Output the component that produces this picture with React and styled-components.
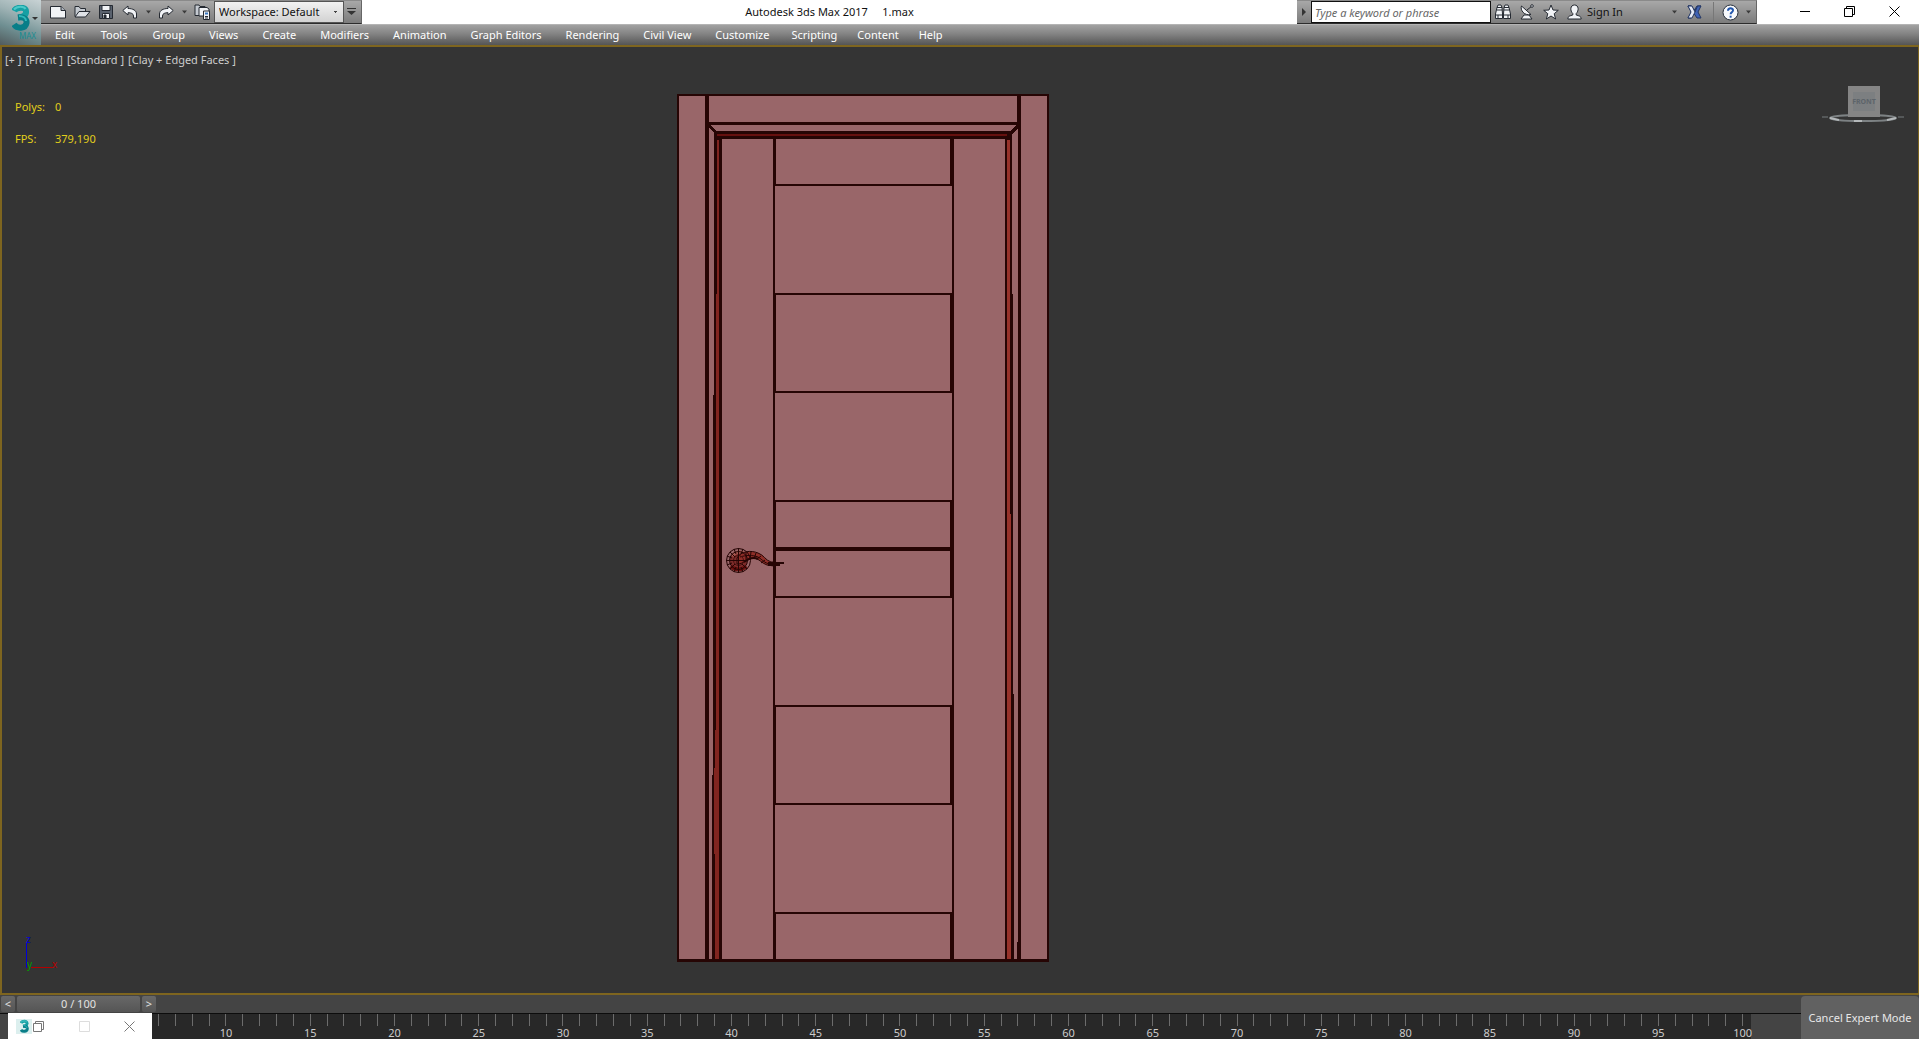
import { useState } from 'react';
import styled, { createGlobalStyle } from 'styled-components';

const GlobalStyle = createGlobalStyle`
  * {
    box-sizing: border-box;
  }
  body {
    margin: 0;
    background: #444;
    font-family: 'Noto Sans', 'Open Sans', sans-serif;
    font-size: 11px;
    line-height: 16px;
  }
  button, input, select {
    font: inherit;
    color: inherit;
    margin: 0;
    padding: 0;
    border: 0;
    background: none;
  }
  svg {
    display: block;
    flex: none;
  }
`

const Page = styled.div`
  position: relative;
  display: flex;
  flex-direction: column;
  height: 100vh;
  overflow: hidden;
`

const Header = styled.header`
  display: grid;
  grid-template-columns: 41px 1fr;
  grid-template-rows: 24px 21px;
`

const AppButton = styled.button`
  grid-row: 1 / 3;
  display: flex;
  align-items: center;
  background: linear-gradient(200deg, #c9d3d5 0%, #9fb3b5 35%, #6f8f92 65%, #515b5d 100%);
`

const TitleBar = styled.div`
  display: flex;
  background: #fff;
  min-width: 0;
`

const ToolStrip = styled.div`
  display: flex;
  align-items: center;
  height: 24px;
  padding: ${props => props.pad};
  background: linear-gradient(#a8a8a8, #7c7c7c);
  border-top: 1px solid #8a8a8a;
  border-bottom: 1px solid #2c2c2c;
  border-right: 1px solid #666;
`

const IconButton = styled.button`
  display: flex;
  flex: none;
  align-items: center;
  justify-content: center;
  width: ${props => props.w || 24}px;
  height: 22px;
`

const WorkspaceSelect = styled.select`
  appearance: none;
  width: 130px;
  height: 22px;
  padding: 0 4px;
  border: 1px solid #555;
  color: #111;
  background:
    linear-gradient(#444, #444) 119px 9px / 3px 1px no-repeat,
    linear-gradient(#444, #444) 120px 10px / 1px 1px no-repeat,
    linear-gradient(#f2f2f2, #d2d2d2);
`

const Title = styled.h1`
  flex: 1;
  margin: 0;
  font-size: 11px;
  font-weight: 400;
  line-height: 24px;
  text-align: center;
  white-space: pre;
  color: #111;
`

const SearchInput = styled.input`
  width: 180px;
  height: 22px;
  padding: 0 3px;
  border: 1px solid #111;
  background: #fff;
  font-style: italic;
  &::placeholder {
    color: #666;
    opacity: 1;
  }
`

const SignIn = styled.button`
  display: flex;
  align-items: center;
  gap: 5px;
  width: 99px;
  height: 22px;
  margin-left: 4px;
  white-space: nowrap;
  color: #111;
`

const Separator = styled.span`
  width: 1px;
  height: 20px;
  margin: 0 6px 0 7px;
  background: #777;
`

const WindowButtons = styled.div`
  display: flex;
  padding: ${props => props.pad || 0};
  margin-left: auto;
`

const WindowButton = styled.button`
  display: flex;
  align-items: center;
  justify-content: center;
  width: 45px;
  height: 22px;
`

const MenuBar = styled.nav`
  display: flex;
  padding-left: 1px;
  border-top: 1px solid #b4b4b4;
  background: linear-gradient(#a2a2a2, #838383 45%, #555);
`

const MenuButton = styled.button`
  height: 20px;
  padding: 0 ${props => props.pad}px;
  color: #fff;
  white-space: nowrap;
`

const Viewport = styled.main`
  position: relative;
  flex: 1;
  min-height: 0;
  overflow: hidden;
  border: 2px solid #7e651f;
  border-right-width: 1px;
  background: #343434;
`

const ViewLabels = styled.div`
  display: flex;
  gap: 4px;
  padding: 5px 3px;
  color: #ccc;
`

const Stats = styled.dl`
  display: grid;
  grid-template-columns: 40px auto;
  row-gap: 16px;
  margin: 0;
  padding: 26px 13px;
  color: #e2cf1b;
  dd {
    margin: 0;
  }
`

// objects that float on the viewport canvas
const Placed = styled.div`
  position: absolute;
  left: ${props => props.left};
  right: ${props => props.right};
  top: ${props => props.top};
  bottom: ${props => props.bottom};
`

const BottomBar = styled.footer`
  display: flex;
  height: 44px;
  background: #444;
`

const TimeArea = styled.div`
  flex: 1;
  min-width: 0;
  display: flex;
  flex-direction: column;
`

const SliderRow = styled.div`
  display: flex;
  gap: 2px;
  height: 18px;
  padding: 1px;
`

const SliderButton = styled.button`
  width: ${props => props.w}px;
  height: 16px;
  border-radius: 2px;
  background: linear-gradient(#686868, #555);
  color: #e2e2e2;
`

const TrackBar = styled.div`
  display: flex;
  flex: 1;
  padding: 0 50px 0 49px;
  border-top: 1px solid #0c0c0c;
`

const Ruler = styled.div`
  flex: 1;
  display: grid;
  grid-template-columns: repeat(101, minmax(0, 1fr));
  background: #282828;
`

const Frame = styled.div`
  display: flex;
  flex-direction: column;
  align-items: center;
  color: #ccc;
  line-height: 14px;
  &::before {
    content: '';
    width: 1px;
    height: 12px;
    background: #6c6c6c;
  }
`

const CancelButton = styled.button`
  width: 118px;
  margin-top: 1px;
  border-radius: 4px 4px 0 0;
  background: #616161;
  color: #e8e8e8;
`

const MiniWindow = styled.div`
  position: absolute;
  left: 8px;
  bottom: 0;
  display: flex;
  align-items: center;
  width: 144px;
  height: 26px;
  padding-left: 8px;
  background: #fff;
`

const MiniLogo = styled.span`
  display: flex;
  justify-content: center;
  width: 16px;
  background: #dcefee;
`

const Caret = () => (
  <svg width="5" height="4" viewBox="0 0 5 3"><path d="M0 0h5L2.5 3z" fill="#3a3a3a" /></svg>
)

const Logo = ({ w, h }) => (
  <svg width={w} height={h} viewBox="0 0 18 26">
    <path d="M2 6C4 2 14 1 14 6.500C14.500 11 9 12.500 6 12.500" fill="none" stroke="#16a0a4" strokeWidth="6" />
    <path d="M6 12.500C12 11.500 15 14 14.500 18C13.500 24 5 24 2 19.500" fill="none" stroke="#087e88" strokeWidth="6" />
    <path d="M2 4.500C5 1 12 1 13.500 4" fill="none" stroke="#4cc9c8" strokeWidth="2" />
    <path d="M7 11C11 11 14 13 14 16" fill="none" stroke="#2fb9ba" strokeWidth="2" />
  </svg>
)

const ink = { stroke: '#252a32', strokeWidth: 1, fill: '#f1f3f6', strokeLinejoin: 'round' }

const NewIcon = () => (
  <svg width="16" height="14" viewBox="0 0 16 14" {...ink}>
    <path d="M.5 1.500h10.500l4.500 4v7.500H.5z" /><path d="M11 1.500v4h4.500" fill="#aab0b8" />
  </svg>
)
const OpenIcon = () => (
  <svg width="17" height="14" viewBox="0 0 17 14" {...ink}>
    <path d="M1 11.500V1.500h4l1.500 2h5v3" fill="#c5cad1" /><path d="M1 12l4-5.500h11L11.500 12z" fill="#dfe2e7" />
  </svg>
)
const SaveIcon = () => (
  <svg width="14" height="14" viewBox="0 0 14 14" {...ink}>
    <path d="M.5.5h13v13H.5z" fill="#5a626e" /><path d="M3 .5h8v5H3z" /><path d="M3.500 8.500h7v5h-7z" /><path d="M5 10h2v3H5z" fill="#252a32" />
  </svg>
)
const UndoIcon = ({ flip }) => (
  <svg width="16" height="14" viewBox="0 0 16 14" {...ink}>
    <path transform={flip ? 'translate(16 0) scale(-1 1)' : undefined} d="M.8 5.500L6 1v2.500c5 0 8.500 2 8.500 5.500v4h-3V11C11.500 8.500 9 7.700 6 7.700V10z" />
  </svg>
)
const ProjectIcon = () => (
  <svg width="17" height="16" viewBox="0 0 17 16" {...ink}>
    <path d="M1 11.500V1h4l1 1.500h5v9z" fill="#c5cad1" /><path d="M5 12V3.500h8l2 1.500v7z" />
    <path d="M9.500 7h6v8.500h-6z" /><path d="M11 8.500h3v2h-3z" fill="#3977c0" stroke="none" />
    <path d="M11 12.500h3M11 14h3" />
  </svg>
)
const BinocularsIcon = () => (
  <svg width="16" height="16" viewBox="0 0 16 16" {...ink}>
    <path d="M.5 10l1.500-6.500L3 1h3l1 2.500.5 6.500v4.500h-7zM8.500 10L9 3.500 10 1h3l1 2.500 1.500 6.500v4.500h-7z" />
    <path d="M2 6h5M9 6h5M1 11h6M9 11h6M2 3.500h5M9 3.500h5M3 11v3M13 11v3" />
  </svg>
)
const DishIcon = () => (
  <svg width="15" height="16" viewBox="0 0 15 16" {...ink}>
    <path d="M4 11h5l3 4H1z" /><path d="M1.500 2C0 6 4 12 11 10.500z" /><path d="M7 6l5-4" /><circle cx="12" cy="2" r="1.300" />
  </svg>
)
const StarIcon = () => (
  <svg width="16" height="16" viewBox="0 0 16 16" {...ink}>
    <path d="M8 1l2 5 5.300.3-4.100 3.400L12.600 15 8 12l-4.600 3 1.400-5.300L.7 6.300 6 6z" />
  </svg>
)
const UserIcon = () => (
  <svg width="15" height="16" viewBox="0 0 15 16" {...ink}>
    <path d="M.8 15c0-3 2-3 5-4v-1.500C3 7 3 1 7.500 1s4.500 6 1.700 8.500V11c3 1 5 1 5 4z" />
  </svg>
)
const ExchangeIcon = () => (
  <svg width="15" height="14" viewBox="0 0 15 14" stroke="#243764" strokeLinejoin="round">
    <path d="M14 1h-4L7 5.500 4 1H1l3.500 6z" fill="#3f62b5" />
    <path d="M14 13h-4L7 8.500 4 13H1l3.500-6L1 1h3.500L8 7l2.500-6H14l-3 6z" fill="#3f62b5" />
    <path d="M1 1h4l3 6-3 6H1l3-6z" fill="#e5eaf5" />
  </svg>
)
const HelpIcon = () => (
  <svg width="17" height="17" viewBox="0 0 17 17">
    <circle cx="8.500" cy="8.500" r="7.500" fill="#f7f9fc" stroke="#28303c" />
    <path d="M6 6.800C6 3.500 11.300 3.600 11 6.500C10.800 8.300 8.600 8.300 8.600 10.300" fill="none" stroke="#2357ae" strokeWidth="2" />
    <path d="M7.600 11.700h2v2h-2z" fill="#2357ae" />
  </svg>
)
const RestoreIcon = ({ color = '#000' }) => (
  <svg width="11" height="11" viewBox="0 0 11 11" fill="none" stroke={color}>
    <path d="M.5 2.500h8v8h-8zM2.500 2.500v-2h8v8h-2" />
  </svg>
)
const CloseIcon = ({ color = '#000' }) => (
  <svg width="11" height="11" viewBox="0 0 11 11" stroke={color}><path d="M.5.5l10 10M10.500.5l-10 10" /></svg>
)

const EDGE = '#260504'

// top and bottom of every cross rail of the door leaf
const rails = [[43, 92], [199, 299], [406, 504], [611, 711], [818, 868]]

const Handle = () => (
  <g fill="none" stroke={EDGE} shapeRendering="auto">
    <circle cx="61.500" cy="466.500" r="9" fill="#7c2c2a" stroke="none" />
    <path d="M54 472c3 4 11 5 15 0" stroke="#6d1210" strokeWidth="4" />
    <path d="M55 462c3-4 8-5 12-3" stroke="#a85850" strokeWidth="3" />
    <path d="M60 464c4-7 14-8 21-5 6 2 7 7 13 9h3v4l-7-1c-6-2-7-6-13-7-6 0-10 6-17 6z" fill="#8f2e28" />
    <path d="M63 463c6-2 13-2 18 0 5 3 6 6 12 7" />
    <path d="M67 468c5-4 10-5 14-3" strokeWidth="2" />
    <path d="M91 469h16M91 471h12" strokeWidth="2" />
    <path d="M69 458v9M74 458l-1 7M79 459l-2 6M84 462l-4 3M88 466l-4 3" />
    <circle cx="61.500" cy="466.500" r="12" />
    <circle cx="61.500" cy="466.500" r="9" />
    <circle cx="61.500" cy="466.500" r="5" stroke="#4b100e" />
    <path d="M49 466.500h20M61.500 454v25M53 458l5 5M53 475l5-5M70 475l-5-5M57 455l2 5M66 455l-2 5M57 478l2-5M66 478l-2-5M50 462l5 2M50 471l5-2" />
  </g>
)

const Door = () => (
  <svg width="372" height="868" viewBox="0 0 372 868" shapeRendering="crispEdges">
    <path d="M0 0h372v868H0z" fill={EDGE} />
    <g fill="#996669">
      <path d="M2 2h26v863H2zM32 2h308v26H32zM344 2h26v863h-26z" />
      <path d="M33 31h306l-6 6H39z" />
      <path d="M32 34l5 5v262h-1v380h-1v184h-3zM341 34l-6 6v160h1v400h1v265h3v-17h1z" />
      <path d="M45 45h51v820H45zM277 45h51v820h-51z" />
      <path d="M98 45h177v820H98z" />
    </g>
    <path d="M40 40h290v2H40z" fill="#66100e" />
    <path d="M40 46h2v819h-4v-105h-1v-86h1v-38h1V200h1z" fill="#812520" />
    <path d="M330 46h3v374h1v445h-4z" fill="#97332b" />
    <g fill={EDGE}>
      {rails.map(([top, bottom]) => (
        <g key={top}>
          <path d={`M98 ${top}h177v2H98zM98 ${bottom - 2}h177v2H98z`} />
          <path d={`M98 ${top}h1v${bottom - top}h-1zM273 ${top}h2v${bottom - top}h-2z`} />
        </g>
      ))}
      <path d="M98 453h177v4H98z" />
    </g>
    <Handle />
  </svg>
)

const ViewCube = () => (
  <svg width="82" height="38" viewBox="0 0 82 38">
    <ellipse cx="41" cy="32" rx="33" ry="3" fill="none" stroke="#7d8284" strokeWidth="2" />
    <path d="M8 32l9 2M74 32l-9 2M32 35h8" stroke="#b4b8ba" strokeWidth="2" />
    <path d="M0 31h6M76 31h6" stroke="#777c7e" />
    <path d="M26 0h32v31H26z" fill="#858585" />
    <path d="M31 6h22v19H31z" fill="#7c7f81" />
    <text x="42" y="18" textAnchor="middle" fontSize="7" fontWeight="700" fill="#5d646a">FRONT</text>
  </svg>
)

const AxisTripod = () => (
  <svg width="36" height="48" viewBox="0 -8 36 48" fontSize="10">
    <path d="M2.500 9v25" stroke="#0000d8" />
    <path d="M7 33.500h22" stroke="#b40000" />
    <text x="2" y="9" fill="#0000d8">z</text>
    <text x="3" y="34" fill="#00a000">y</text>
    <text x="28" y="34" fill="#b40000">x</text>
  </svg>
)

const menus = [
  { pad: 13, names: ['Edit', 'Tools'] },
  { pad: 12, names: ['Group', 'Views', 'Create', 'Modifiers', 'Animation', 'Graph Editors', 'Rendering', 'Civil View', 'Customize'] },
  { pad: 10, names: ['Scripting', 'Content', 'Help'] },
]

const frames = Array.from({ length: 101 }, (_, i) => i)

const App = () => {
  const [workspace, setWorkspace] = useState('Workspace: Default')
  const [search, setSearch] = useState('')

  return (
    <Page>
      <GlobalStyle />
      <Header>
        <AppButton type="button" aria-label="Application menu">
          <svg width="41" height="45" viewBox="0 0 41 45">
            <g transform="translate(12 5)"><Logo w={18} h={26} /></g>
            <path d="M32 17h6l-3 3z" fill="#333" />
            <text x="19" y="39" fontSize="8" fill="#1b8d92">MAX</text>
          </svg>
        </AppButton>
        <TitleBar>
          <ToolStrip pad="0 3px 0 5px">
            <IconButton aria-label="New"><NewIcon /></IconButton>
            <IconButton aria-label="Open"><OpenIcon /></IconButton>
            <IconButton aria-label="Save"><SaveIcon /></IconButton>
            <IconButton aria-label="Undo"><UndoIcon /></IconButton>
            <IconButton w={12} aria-label="Undo list"><Caret /></IconButton>
            <IconButton aria-label="Redo"><UndoIcon flip /></IconButton>
            <IconButton w={12} aria-label="Redo list"><Caret /></IconButton>
            <IconButton aria-label="Project folder"><ProjectIcon /></IconButton>
            <WorkspaceSelect aria-label="Workspace" value={workspace} onChange={(e) => setWorkspace(e.target.value)}>
              <option>Workspace: Default</option>
            </WorkspaceSelect>
            <IconButton w={14} aria-label="Customize toolbar">
              <svg width="9" height="8" viewBox="0 0 9 8" fill="#333"><path d="M0 0h9v1H0zM0 3h9L4.500 7z" /></svg>
            </IconButton>
          </ToolStrip>
          <Title>{'Autodesk 3ds Max 2017     1.max'}</Title>
          <ToolStrip pad="0">
            <IconButton w={14} aria-label="Collapse search">
              <svg width="4" height="8" viewBox="0 0 4 8" fill="#333"><path d="M0 0l4 4-4 4z" /></svg>
            </IconButton>
            <SearchInput
              aria-label="Search"
              placeholder="Type a keyword or phrase"
              value={search}
              onChange={(e) => setSearch(e.target.value)}
            />
            <IconButton aria-label="Find"><BinocularsIcon /></IconButton>
            <IconButton aria-label="Subscription"><DishIcon /></IconButton>
            <IconButton aria-label="Favorites"><StarIcon /></IconButton>
            <SignIn type="button"><UserIcon />Sign In</SignIn>
            <IconButton w={16} aria-label="Account"><Caret /></IconButton>
            <IconButton aria-label="Exchange apps"><ExchangeIcon /></IconButton>
            <Separator />
            <IconButton w={20} aria-label="Help"><HelpIcon /></IconButton>
            <IconButton w={16} aria-label="Help list"><Caret /></IconButton>
          </ToolStrip>
          <WindowButtons pad="0 2px 0 25px">
            <WindowButton aria-label="Minimize">
              <svg width="10" height="1"><path d="M0 0h10v1H0z" /></svg>
            </WindowButton>
            <WindowButton aria-label="Restore"><RestoreIcon /></WindowButton>
            <WindowButton aria-label="Close"><CloseIcon /></WindowButton>
          </WindowButtons>
        </TitleBar>
        <MenuBar>
          {menus.map(({ pad, names }) => names.map((name) => (
            <MenuButton key={name} type="button" pad={pad}>{name}</MenuButton>
          )))}
        </MenuBar>
      </Header>

      <Viewport>
        <ViewLabels>
          <span>[+ ]</span>
          <span>[Front ]</span>
          <span>[Standard ]</span>
          <span>[Clay + Edged Faces ]</span>
        </ViewLabels>
        <Stats>
          <dt>Polys:</dt>
          <dd>0</dd>
          <dt>FPS:</dt>
          <dd>379,190</dd>
        </Stats>
        <Placed left="calc(50% - 283px)" top="47px"><Door /></Placed>
        <Placed right="14px" top="39px"><ViewCube /></Placed>
        <Placed left="22px" bottom="19px"><AxisTripod /></Placed>
      </Viewport>

      <BottomBar>
        <TimeArea>
          <SliderRow>
            <SliderButton w={14} aria-label="Previous frame">&lt;</SliderButton>
            <SliderButton w={123}>0 / 100</SliderButton>
            <SliderButton w={14} aria-label="Next frame">&gt;</SliderButton>
          </SliderRow>
          <TrackBar>
            <Ruler>
              {frames.map((n) => <Frame key={n}>{n % 5 === 0 && n > 5 ? n : null}</Frame>)}
            </Ruler>
          </TrackBar>
        </TimeArea>
        <CancelButton type="button">Cancel Expert Mode</CancelButton>
      </BottomBar>

      <MiniWindow>
        <MiniLogo><Logo w={9} h={15} /></MiniLogo>
        <IconButton w={12} aria-label="Restore panel"><RestoreIcon color="#777" /></IconButton>
        <WindowButtons>
          <WindowButton aria-label="Maximize panel" disabled>
            <svg width="11" height="11"><path d="M.5.5h10v10H.5z" fill="none" stroke="#ddd" /></svg>
          </WindowButton>
          <WindowButton aria-label="Close panel"><CloseIcon color="#777" /></WindowButton>
        </WindowButtons>
      </MiniWindow>
    </Page>
  )
}

export default App;
